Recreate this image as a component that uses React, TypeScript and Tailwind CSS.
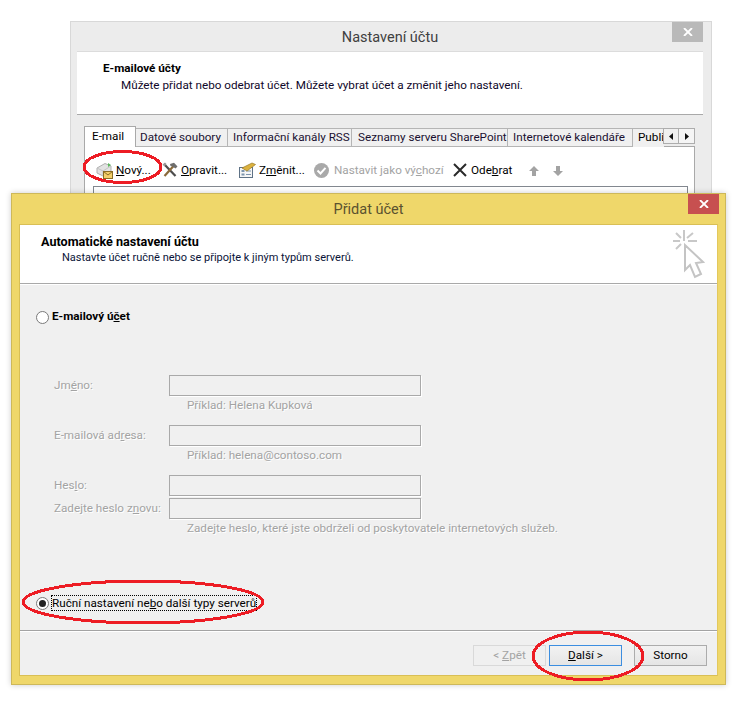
import type { ReactNode } from 'react';

const tabs = [
  { label: 'Datové soubory', w: 'w-[92px]', pad: 'pl-[4px]' },
  { label: 'Informační kanály RSS', w: 'w-[124px]', pad: 'pl-[5px]' },
  { label: 'Seznamy serveru SharePoint', w: 'w-[156px]', pad: 'pl-[6px]' },
  { label: 'Internetové kalendáře', w: 'w-[125px]', pad: 'pl-[5px]' },
];

function MailIcon() {
  return (
    <svg width="17" height="17" viewBox="0 0 17 17">
      <path d="M1 6 L9 1.5 L15 4 L15 9 L7 14 L1 11 Z" fill="#e2e2e2" stroke="#b0b0b0" />
      <path d="M1 6 L7 9 L15 4 M7 9 L7 14" fill="none" stroke="#c4c4c4" />
      <path d="M12 1 L15 3 L12 5 Z" fill="#5cb85c" />
      <rect x="7.5" y="9.5" width="9" height="7" fill="#f2cf6a" stroke="#8a6d25" />
      <path d="M7.5 9.5 L12 13 L16.5 9.5" fill="none" stroke="#8a6d25" />
    </svg>
  );
}

function ToolsIcon() {
  return (
    <svg width="16" height="16" viewBox="0 0 16 16">
      <path d="M2 2 L13.5 14" stroke="#4d4d4d" strokeWidth="2.2" />
      <path d="M12 3.5 L2.5 14" stroke="#8a6a3a" strokeWidth="2.2" />
      <path d="M8 2 L12 0.8 L15.5 4.5 L13.5 6.5 L10.5 4.5 L8.5 4 Z" fill="#6d6d6d" />
      <path d="M0.5 2.5 L3 0.5 L4.5 2 L2.5 4.5 Z" fill="#9a9a9a" />
    </svg>
  );
}

function ChangeIcon() {
  return (
    <svg width="17" height="16" viewBox="0 0 17 16">
      <rect x="0.5" y="5.5" width="13" height="10" fill="#f6f6f6" stroke="#5f7286" />
      <rect x="2.5" y="8" width="3" height="2" fill="#7d95ad" />
      <rect x="2.5" y="11.5" width="3" height="2" fill="#7d95ad" />
      <path d="M7 9 H12 M7 12.5 H12" stroke="#7d95ad" />
      <path d="M3 6 L13 1 L16.5 2.5 L8 9 Z" fill="#dcb23f" stroke="#9a7a25" strokeWidth="0.7" />
    </svg>
  );
}

function CheckIcon() {
  return (
    <svg width="15" height="15" viewBox="0 0 15 15">
      <circle cx="7.5" cy="7.5" r="7.5" fill="#a9a9a9" />
      <path d="M3.5 7.5 L6.5 10.5 L11.5 4.8" fill="none" stroke="#fff" strokeWidth="2" />
    </svg>
  );
}

function RemoveIcon() {
  return (
    <svg width="14" height="14" viewBox="0 0 14 14">
      <path d="M1 1 L13 13 M13 1 L1 13" stroke="#2a2a2a" strokeWidth="2" />
    </svg>
  );
}

function ArrowIcon({ down }: { down?: boolean }) {
  return (
    <svg width="10" height="10" viewBox="0 0 10 10" className={down ? 'rotate-180' : ''}>
      <path d="M5 0 L10 5 L7 5 L7 10 L3 10 L3 5 L0 5 Z" fill="#a3a3a3" />
    </svg>
  );
}

function CursorIcon() {
  return (
    <svg width="34" height="50" viewBox="0 0 34 50">
      <path d="M14 16 L14 41 L19 36 L24 48 L30 45 L25 34 L32 33 Z" fill="#fff" stroke="#c4c4c4" strokeWidth="2" />
      <path d="M13 1 V12 M2 12 L9 12 M26 12 H17 M5 4 L10 9 M22 4 L16 9 M5 20 L10 15" stroke="#c8c8c8" strokeWidth="2" />
    </svg>
  );
}

function CloseGlyph() {
  return (
    <svg width="10" height="8" viewBox="0 0 10 8">
      <path d="M1 0 L9 8 M9 0 L1 8" stroke="#fff" strokeWidth="1.8" />
    </svg>
  );
}

function Triangle({ right }: { right?: boolean }) {
  return (
    <svg width="4" height="7" viewBox="0 0 4 7">
      <path d={right ? 'M0 0 L4 3.5 L0 7 Z' : 'M4 0 L0 3.5 L4 7 Z'} fill="#111" />
    </svg>
  );
}

function ToolItem({ icon, children, className }: { icon: ReactNode; children: ReactNode; className: string }) {
  return (
    <div className={`flex items-center ${className}`}>
      {icon}
      <span>{children}</span>
    </div>
  );
}

function Field({ label, hint, className }: { label: ReactNode; hint?: string; className?: string }) {
  return (
    <div className={className}>
      <div className="flex items-center">
        <div className="w-[115px] text-[#a3a3a3] [text-shadow:1px_1px_0_#fff]">{label}</div>
        <div className="w-[252px] h-[21px] border border-[#a9a9a9] shadow-[1px_1px_0_#fff]" />
      </div>
      {hint && <div className="ml-[133px] h-[19px] leading-[19px] text-[#a3a3a3] [text-shadow:1px_1px_0_#fff] whitespace-nowrap">{hint}</div>}
    </div>
  );
}

export default function App() {
  return (
    <div className="relative w-[739px] h-[706px] bg-white overflow-hidden text-[11.7px] text-black [font-family:Roboto,sans-serif]">
      {/* zadni okno */}
      <div className="absolute left-[70px] top-[21px] w-[642px] h-[200px] bg-[#ececec] border border-[#d8d8d8] pl-[6px] pr-[8px]">
        <div className="relative h-[29px] pt-[3px] flex items-center justify-center text-[14.5px] text-[#404040]">
          Nastavení účtu
          <div className="absolute right-0 top-0 w-[31px] h-[20px] bg-[#b9b9b9] flex items-center justify-center">
            <CloseGlyph />
          </div>
        </div>
        <div className="h-[64px] bg-white border-t border-[#dcdcdc] border-b-[#a9a9a9] border-b pl-[26px] pt-[7px]">
          <div className="font-bold leading-[18px]">E-mailové účty</div>
          <div className="pl-[18px] leading-[16px] text-[#10082a] whitespace-nowrap">Můžete přidat nebo odebrat účet. Můžete vybrat účet a změnit jeho nastavení.</div>
        </div>
        <div className="pt-[11px] pl-[7px] pr-[8px]">
          <div className="relative flex items-end h-[21px] whitespace-nowrap">
            <div className="w-[52px] h-[21px] pl-[7px] bg-white border border-b-0 border-[#a9a9a9] z-10 leading-[19px]">E-mail</div>
            {tabs.map((t) => (
              <div key={t.label} className={`${t.w} ${t.pad} h-[19px] bg-[#f0f0f0] border border-l-0 border-[#b5b5b5] leading-[17px] text-[#1a1030]`}>
                {t.label}
              </div>
            ))}
            <div className="w-[31px] h-[19px] pl-[5px] bg-[#f0f0f0] border-t border-[#b5b5b5] leading-[17px] overflow-hidden">Publi</div>
            <div className="absolute right-0 top-[2px] flex">
              <div className="w-[16px] h-[16px] bg-[#f0f0f0] border border-[#adadad] flex items-center justify-center"><Triangle /></div>
              <div className="w-[16px] h-[16px] bg-[#f5f5f5] border border-l-0 border-[#adadad] flex items-center justify-center"><Triangle right /></div>
            </div>
          </div>
          <div className="h-[60px] -mt-px bg-white border border-[#a9a9a9] pl-[11px] pr-[6px] pt-[8px]">
            <div className="flex items-center h-[31px] whitespace-nowrap">
              <ToolItem icon={<MailIcon />} className="w-[66px] gap-[3px]"><u>N</u>ový...</ToolItem>
              <ToolItem icon={<ToolsIcon />} className="w-[77px] gap-[3px]"><u>O</u>pravit...</ToolItem>
              <ToolItem icon={<ChangeIcon />} className="w-[75px] gap-[3px]">Z<u>m</u>ěnit...</ToolItem>
              <ToolItem icon={<CheckIcon />} className="w-[139px] gap-[5px] text-[#a3a3a3]">Nastavit jako vý<u>c</u>hozí</ToolItem>
              <ToolItem icon={<RemoveIcon />} className="w-[76px] gap-[4px]">Ode<u>b</u>rat</ToolItem>
              <div className="flex gap-[14px]"><ArrowIcon /><ArrowIcon down /></div>
            </div>
            <div className="h-[20px] -ml-[3px] border border-[#82878f] border-b-0" />
          </div>
        </div>
      </div>

      {/* predni dialog */}
      <div className="absolute left-[11px] top-[193px] w-[715px] h-[492px] bg-[#efd76a] border border-[#cdb85a] shadow-[0_0_6px_rgba(0,0,0,0.2)] px-[7px] pt-[30px] pb-[8px] flex flex-col">
        <div className="absolute left-0 right-0 top-0 h-[30px] pt-[1px] flex items-center justify-center text-[14.5px] text-[#5a5230]">Přidat účet</div>
        <div className="absolute right-[6px] top-0 w-[31px] h-[20px] bg-[#c75050] flex items-center justify-center">
          <CloseGlyph />
        </div>
        <div className="flex-1 flex flex-col bg-[#f0f0f0] border border-[#d9bf55] border-r-[#e3c85c] min-h-0">
          <div className="relative h-[59px] bg-white border-b border-[#a9a9a9] pl-[21px] pt-[8px]">
            <div className="font-bold text-[12.6px] leading-[17px]">Automatické nastavení účtu</div>
            <div className="pl-[21px] text-[11px] leading-[15px] text-[#0a1438]">Nastavte účet ručně nebo se připojte k jiným typům serverů.</div>
            <div className="absolute right-[12px] top-[4px]"><CursorIcon /></div>
          </div>
          <div className="flex-1 flex flex-col border-t border-white pl-[16px] pt-[24px]">
            <label className="flex items-center gap-[3px] h-[16px] font-bold">
              <span className="w-[13px] h-[13px] rounded-full bg-white border border-[#7a7a7a]" />
              <span>E-mailový ú<u>č</u>et</span>
            </label>
            <div className="pl-[18px] mt-[50px]">
              <Field label={<>Jm<u>é</u>no:</>} hint="Příklad: Helena Kupková" className="h-[50px]" />
              <Field label={<>E-mailová ad<u>r</u>esa:</>} hint="Příklad: helena@contoso.com" className="h-[50px]" />
              <Field label={<>Hes<u>l</u>o:</>} className="h-[23px]" />
              <Field label={<>Zadejte heslo z<u>n</u>ovu:</>} hint="Zadejte heslo, které jste obdrželi od poskytovatele internetových služeb." />
            </div>
            <div className="mt-auto mb-[19px] flex items-center gap-[3px] h-[16px]">
              <span className="w-[13px] h-[13px] rounded-full bg-white border border-[#7a7a7a] flex items-center justify-center">
                <span className="w-[7px] h-[7px] rounded-full bg-[#222]" />
              </span>
              <span className="outline-1 outline-dotted outline-black leading-[14px] whitespace-nowrap">Ruční nastavení ne<u>b</u>o další typy serverů</span>
            </div>
          </div>
          <div className="h-[45px] border-t border-[#a3a3a3] flex items-start justify-end pt-[14px] pr-[10px] shadow-[inset_0_1px_0_#fff]">
            <button className="w-[73px] h-[21px] border border-[#d9d9d9] text-[#a3a3a3]">&lt; <u>Z</u>pět</button>
            <button className="w-[73px] h-[21px] ml-[3px] border border-[#3c8ee0] bg-gradient-to-b from-[#f2f2f2] to-[#e5e5e5]"><u>D</u>alší &gt;</button>
            <button className="w-[73px] h-[21px] ml-[12px] border border-[#acacac] bg-gradient-to-b from-[#f2f2f2] to-[#e5e5e5]">Storno</button>
          </div>
        </div>
      </div>

      {/* cervene krouzky */}
      <svg className="absolute left-0 top-0 pointer-events-none" width="739" height="706" shapeRendering="crispEdges">
        <ellipse cx="122.5" cy="167" rx="38.5" ry="15.5" fill="none" stroke="#ed1c24" strokeWidth="3" />
        <ellipse cx="143" cy="602" rx="120" ry="21" fill="none" stroke="#ed1c24" strokeWidth="3" />
        <ellipse cx="588" cy="656" rx="55" ry="24" fill="none" stroke="#ed1c24" strokeWidth="3" />
      </svg>
    </div>
  );
}
